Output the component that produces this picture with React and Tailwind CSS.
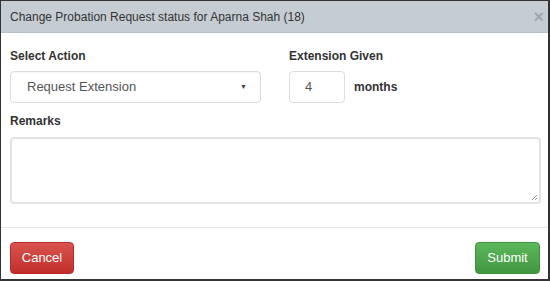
export default function App() {
  return (
    <div className="w-[550px] h-[281px] bg-white border border-[#333] border-r-2 border-b-2 flex flex-col overflow-hidden font-['Liberation_Sans',Arial,sans-serif]">
      {/* Header */}
      <div className="h-[32px] shrink-0 bg-[#c5cdd3] border-b border-[#b7c0c7] flex items-center justify-between pl-[9px] pr-[4px]">
        <h4 className="text-[12px] text-[#333] leading-none">Change Probation Request status for Aparna Shah (18)</h4>
        <span className="text-[#a0a8ae] text-[18px] font-bold leading-none">×</span>
      </div>

      {/* Body */}
      <div className="px-[9px] pt-[17px] pb-[23px] border-b border-[#e5e5e5]">
        <div className="flex">
          <div className="w-[279px]">
            <label className="block text-[12px] font-bold text-[#333] leading-none mb-[9px]">Select Action</label>
            <div className="w-[251px] h-[32px] border border-[#ddd] rounded-[4px] flex items-center justify-between pl-[16px] pr-[13px] shadow-[inset_0_1px_1px_rgba(0,0,0,0.04)]">
              <span className="text-[13px] text-[#555]">Request Extension</span>
              <span className="text-[7px] text-[#444]">▼</span>
            </div>
          </div>
          <div>
            <label className="block text-[12px] font-bold text-[#333] leading-none mb-[9px]">Extension Given</label>
            <div className="flex items-center gap-[9px]">
              <div className="w-[56px] h-[32px] border border-[#ddd] rounded-[4px] flex items-center pl-[15px]">
                <span className="text-[13px] text-[#555]">4</span>
              </div>
              <span className="text-[12px] font-bold text-[#333]">months</span>
            </div>
          </div>
        </div>
        <label className="block text-[12px] font-bold text-[#333] leading-none mt-[12px] mb-[10px]">Remarks</label>
        <div className="relative w-[531px] h-[67px] border-2 border-[#e4e4e4] rounded-[4px]">
          <svg className="absolute right-[1px] bottom-[1px]" width="7" height="7" viewBox="0 0 7 7">
            <path d="M6 1 L1 6 M6 4 L4 6" stroke="#999" strokeWidth="1" />
          </svg>
        </div>
      </div>

      {/* Footer */}
      <div className="flex justify-between items-center pl-[9px] pr-[8px] pt-[14px]">
        <button className="w-[64px] h-[32px] rounded-[4px] bg-gradient-to-b from-[#d9534f] to-[#c12e2a] border border-[#b92c28] text-white text-[13px]">Cancel</button>
        <button className="w-[65px] h-[32px] rounded-[4px] bg-gradient-to-b from-[#5cb85c] to-[#419641] border border-[#3e8f3e] text-white text-[13px]">Submit</button>
      </div>
    </div>
  );
}
